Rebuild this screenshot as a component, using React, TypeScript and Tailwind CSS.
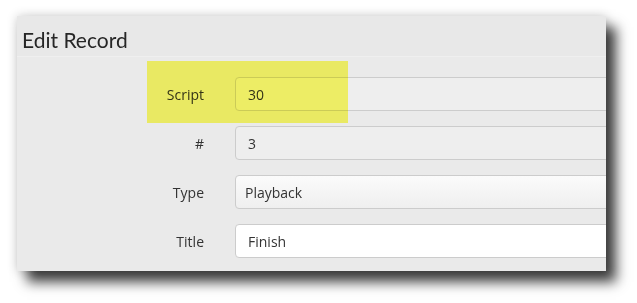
import React from "react";

const font = { fontFamily: '"Open Sans", "Liberation Sans", sans-serif' };

export default function App() {
  return (
    <div className="relative w-[637px] h-[303px] bg-white pt-[16px] pl-[17px]" style={font}>
      <div className="relative w-[589px] h-[255px] overflow-hidden bg-[#eaeaea] shadow-[0_0_10px_rgba(0,0,0,0.2),10px_11px_12px_rgba(0,0,0,0.75)]">
        <div className="h-[41px] bg-[#e8e8e8] border-b border-[#efefef] pl-[5px] pt-[9px]">
          <h1 className="text-[21px] leading-[30px] text-[#262626] font-[Lato,sans-serif]">Edit Record</h1>
        </div>
        <div className="flex flex-col gap-[15px] pt-[20px]">
          <Row label="Script">
            <div className="h-[34px] w-[420px] shrink-0 rounded-[4px] border border-[#cccccc] bg-[#eeeeee] pl-[12px] flex items-center text-[14px] text-[#333]">30</div>
          </Row>
          <Row label="#">
            <div className="h-[34px] w-[420px] shrink-0 rounded-[4px] border border-[#cccccc] bg-[#eeeeee] pl-[12px] flex items-center text-[14px] text-[#333]">3</div>
          </Row>
          <Row label="Type">
            <div className="h-[34px] w-[420px] shrink-0 rounded-[4px] border border-[#cccccc] bg-gradient-to-b from-[#fbfbfb] to-[#efefef] pl-[9px] flex items-center text-[14px] text-[#333]">Playback</div>
          </Row>
          <Row label="Title">
            <div className="h-[34px] w-[420px] shrink-0 rounded-[4px] border border-[#cccccc] bg-white pl-[12px] flex items-center text-[14px] text-[#333]">Finish</div>
          </Row>
        </div>
      </div>
      <div className="absolute left-[147px] top-[61px] w-[201px] h-[62px] bg-[#fefe6c] mix-blend-multiply" />
    </div>
  );
}

function Row({ label, children }: { label: string; children: React.ReactNode }) {
  return (
    <div className="flex items-center">
      <div className="w-[188px] shrink-0 text-right text-[14px] text-[#333] pr-[1px]">{label}</div>
      <div className="ml-[30px] shrink-0">{children}</div>
    </div>
  );
}
